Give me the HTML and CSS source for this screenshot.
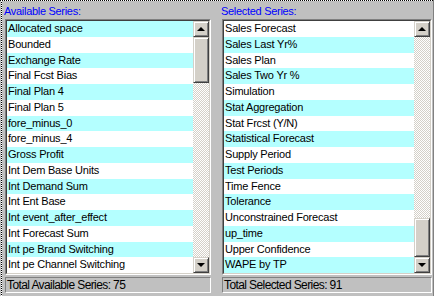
FILE: index.html
```html
<!DOCTYPE html>
<html lang="en">
<head>
    <meta charset="UTF-8">
    <title>Series Selection</title>
    <link rel="stylesheet" href="styles.css">
</head>
<body>
<div class="frame">
    <!-- Available series -->
    <div class="panel panel-left">
        <div class="label">Available Series:</div>
        <div class="listbox">
            <div class="listbox-inner">
                <ul class="rows shade-odd">
                    <li>Allocated space</li>
                    <li>Bounded</li>
                    <li>Exchange Rate</li>
                    <li>Final Fcst Bias</li>
                    <li>Final Plan 4</li>
                    <li>Final Plan 5</li>
                    <li>fore_minus_0</li>
                    <li>fore_minus_4</li>
                    <li>Gross Profit</li>
                    <li>Int Dem Base Units</li>
                    <li>Int Demand Sum</li>
                    <li>Int Ent Base</li>
                    <li>Int event_after_effect</li>
                    <li>Int Forecast Sum</li>
                    <li>Int pe Brand Switching</li>
                    <li>Int pe Channel Switching</li>
                </ul>
                <div class="scrollbar">
                    <div class="sb-btn"><span class="arrow-up"></span></div>
                    <div class="sb-thumb thumb-left"></div>
                    <div class="sb-track"></div>
                    <div class="sb-btn"><span class="arrow-down"></span></div>
                </div>
            </div>
        </div>
        <div class="status">Total Available Series: 75</div>
    </div>

    <!-- Selected series -->
    <div class="panel panel-right">
        <div class="label">Selected Series:</div>
        <div class="listbox">
            <div class="listbox-inner">
                <ul class="rows shade-even">
                    <li>Sales Forecast</li>
                    <li>Sales Last Yr%</li>
                    <li>Sales Plan</li>
                    <li>Sales Two Yr %</li>
                    <li>Simulation</li>
                    <li>Stat Aggregation</li>
                    <li>Stat Frcst (Y/N)</li>
                    <li>Statistical Forecast</li>
                    <li>Supply Period</li>
                    <li>Test Periods</li>
                    <li>Time Fence</li>
                    <li>Tolerance</li>
                    <li>Unconstrained Forecast</li>
                    <li>up_time</li>
                    <li>Upper Confidence</li>
                    <li>WAPE by TP</li>
                </ul>
                <div class="scrollbar">
                    <div class="sb-btn"><span class="arrow-up"></span></div>
                    <div class="sb-track"></div>
                    <div class="sb-thumb thumb-right"></div>
                    <div class="sb-btn"><span class="arrow-down"></span></div>
                </div>
            </div>
        </div>
        <div class="status">Total Selected Series: 91</div>
    </div>
</div>
</body>
</html>
```

FILE: styles.css
```css
body {
    margin: 0;
    padding: 0;
    background-color: #c0c0c0;
    font-family: "Liberation Sans", Arial, sans-serif;
    font-size: 11px;
    color: #000;
}
.frame {
    width: 434px;
    height: 296px;
    box-sizing: border-box;
    display: flex;
    gap: 11px;
    padding-left: 5px;
    border-right: 1px solid #808080;
    /* dotted focus rectangle on top and left */
    background-image:
        linear-gradient(90deg, #000 50%, #fff 50%),
        linear-gradient(#000 50%, #fff 50%);
    background-size: 2px 1px, 1px 2px;
    background-repeat: repeat-x, repeat-y;
    background-position: 0 0, 1px 0;
}
.panel {
    padding-top: 4px;
    display: flex;
    flex-direction: column;
}
.panel-left {
    width: 206px;
}
.panel-right {
    width: 210px;
}
.label {
    color: #0000ff;
    height: 15px;
    line-height: 15px;
    margin-left: -1px;
    letter-spacing: -0.3px;
    white-space: nowrap;
}
.listbox {
    height: 256px;
    box-sizing: border-box;
    border: 1px solid;
    border-color: #808080 #fff #fff #808080;
}
.listbox-inner {
    height: 100%;
    box-sizing: border-box;
    border: 1px solid;
    border-color: #404040 #d4d0c8 #d4d0c8 #404040;
    background-color: #fff;
    display: flex;
}
.rows {
    list-style: none;
    margin: 0;
    padding: 0;
    flex: 1;
    overflow: hidden;
}
.rows li {
    height: 15.75px;
    line-height: 15px;
    padding-left: 1px;
    letter-spacing: -0.2px;
    white-space: nowrap;
}
.shade-odd li:nth-child(odd),
.shade-even li:nth-child(even) {
    background-color: #b4ffff;
}
.scrollbar {
    width: 16px;
    display: flex;
    flex-direction: column;
}
.sb-btn, .sb-thumb {
    box-sizing: border-box;
    background-color: #d4d0c8;
    border: 1px solid;
    border-color: #d4d0c8 #404040 #404040 #d4d0c8;
    box-shadow: inset 1px 1px #fff, inset -1px -1px #808080;
}
.sb-btn {
    height: 16px;
    display: flex;
    align-items: center;
    justify-content: center;
}
.thumb-left {
    height: 46px;
}
.thumb-right {
    height: 39px;
}
.sb-track {
    flex: 1;
    background-color: #fff;
    background-image: conic-gradient(#d4d0c8 25%, #fff 0 50%, #d4d0c8 0 75%, #fff 0);
    background-size: 2px 2px;
}
.arrow-up {
    width: 0;
    height: 0;
    border-left: 4px solid transparent;
    border-right: 4px solid transparent;
    border-bottom: 4px solid #000;
}
.arrow-down {
    width: 0;
    height: 0;
    border-left: 4px solid transparent;
    border-right: 4px solid transparent;
    border-top: 4px solid #000;
}
.status {
    margin-top: 2px;
    height: 16px;
    box-sizing: border-box;
    border: 1px solid;
    border-color: #808080 #fff #fff #808080;
    padding-left: 1px;
    font-size: 12px;
    line-height: 14px;
    letter-spacing: -0.6px;
    white-space: nowrap;
}
```
